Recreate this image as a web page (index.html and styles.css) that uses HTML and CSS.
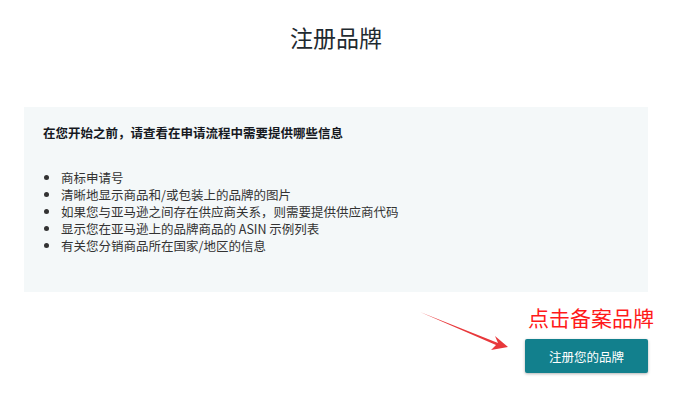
FILE: index.html
```html
<!DOCTYPE html>
<html lang="zh-CN">
<head>
    <meta charset="UTF-8">
    <title>注册品牌</title>
    <link rel="stylesheet" href="styles.css">
</head>
<body>
    <h1 class="title">注册品牌</h1>

    <div class="info-box">
        <h3>在您开始之前，请查看在申请流程中需要提供哪些信息</h3>
        <ul>
            <li>商标申请号</li>
            <li>清晰地显示商品和/或包装上的品牌的图片</li>
            <li>如果您与亚马逊之间存在供应商关系，则需要提供供应商代码</li>
            <li>显示您在亚马逊上的品牌商品的 ASIN 示例列表</li>
            <li>有关您分销商品所在国家/地区的信息</li>
        </ul>
    </div>

    <div class="actions">
        <svg class="arrow" width="100" height="45" viewBox="0 0 100 45">
            <path d="M2 2 L80 33 L77 26 L90 37 L73 40 L78 35 Z" fill="#e8383b"/>
        </svg>
        <div class="cta">
            <span class="note">点击备案品牌</span>
            <button class="register-btn">注册您的品牌</button>
        </div>
    </div>
</body>
</html>
```

FILE: styles.css
```css
body {
    margin: 0;
    padding: 0;
    background-color: #fff;
    font-family: "Noto Sans CJK SC", "Noto Sans", sans-serif;
    color: #232f3e;
    width: 686px;
    height: 418px;
    overflow: hidden;
}
.title {
    margin: 0;
    padding: 21px 14px 0 0;
    text-align: center;
    font-size: 23px;
    font-weight: 400;
    line-height: 32px;
    color: #1f2a30;
}
.info-box {
    margin: 54px 38px 0 24px;
    background-color: #f4f8f9;
    padding: 17px 19px 28px;
    height: 140px;
}
.info-box h3 {
    margin: 0;
    font-size: 12.5px;
    font-weight: 700;
    line-height: 18px;
    color: #16191f;
}
.info-box ul {
    margin: 27px 0 0;
    padding-left: 18px;
    font-size: 12.5px;
    line-height: 17px;
    color: #333;
}
.actions {
    display: flex;
    justify-content: flex-end;
    margin-right: 38px;
    position: relative;
}
.arrow {
    position: absolute;
    left: 418px;
    top: 18px;
}
.cta {
    display: flex;
    flex-direction: column;
    align-items: flex-end;
    padding-top: 12px;
}
.note {
    color: #ff1a1a;
    font-size: 21px;
    line-height: 26px;
    margin-right: -6px;
}
.register-btn {
    margin-top: 9px;
    width: 123px;
    height: 34px;
    background-color: #12808d;
    color: #fff;
    border: none;
    border-radius: 2px;
    font-family: "Noto Sans CJK SC", sans-serif;
    font-size: 12.5px;
    box-shadow: 0 1px 3px rgba(0, 0, 0, 0.3);
}
```
